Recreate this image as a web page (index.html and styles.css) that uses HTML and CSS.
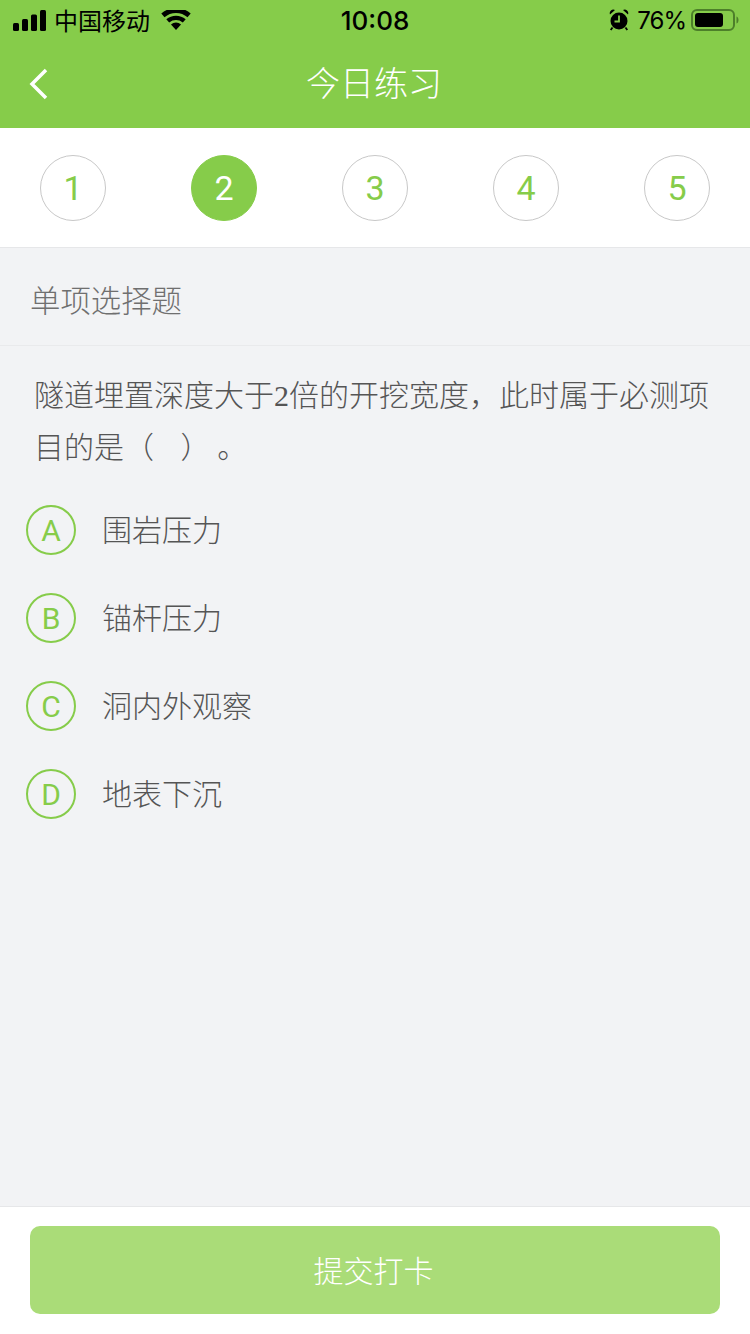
FILE: index.html
```html
<!DOCTYPE html>
<html lang="zh-CN">
<head>
    <meta charset="UTF-8">
    <meta name="viewport" content="width=device-width, initial-scale=1.0">
    <title>今日练习</title>
    <link rel="stylesheet" href="styles.css">
</head>
<body>
    <div class="page">
        <div class="top-bar">
            <div class="status-bar">
                <div class="status-left">
                    <svg class="signal" width="34" height="21" viewBox="0 0 34 21">
                        <rect x="0" y="13" width="6" height="8" rx="1.500"/>
                        <rect x="9" y="9" width="6" height="12" rx="1.500"/>
                        <rect x="18" y="4.500" width="6" height="16.500" rx="1.500"/>
                        <rect x="27" y="0" width="6" height="21" rx="1.500"/>
                    </svg>
                    <span class="carrier">中国移动</span>
                    <svg class="wifi" width="30" height="20" viewBox="0 0 30 20">
                        <path d="M15 20l-5-5.600a7.400 7.400 0 0 1 10 0z"/>
                        <path d="M8.200 12.400l-2.900-3.200a15 15 0 0 1 19.400 0l-2.900 3.200a11 11 0 0 0-13.600 0z"/>
                        <path d="M3.500 7.200L.3 3.600a22 22 0 0 1 29.400 0l-3.200 3.600a17.500 17.500 0 0 0-23 0z"/>
                    </svg>
                </div>
                <div class="status-time">10:08</div>
                <div class="status-right">
                    <svg class="alarm" width="20" height="22" viewBox="0 0 20 22">
                        <circle cx="10" cy="12" r="8.500"/>
                        <path d="M1 5.500a3.600 3.600 0 0 1 5-4.500zM19 5.500a3.600 3.600 0 0 0-5-4.500z"/>
                        <path d="M3.500 18.500l-1.800 2.500M16.500 18.500l1.800 2.500" stroke="#000" stroke-width="1.800"/>
                        <path d="M10 6.500V12.500H5.500" fill="none" stroke="#86cc4a" stroke-width="1.800"/>
                    </svg>
                    <span class="percent">76%</span>
                    <svg class="battery" width="48" height="22" viewBox="0 0 48 22">
                        <rect x="1" y="1" width="42" height="20" rx="5" fill="none" stroke="#4d7f2a" stroke-width="2"/>
                        <rect x="4" y="4" width="28" height="14" rx="3"/>
                        <path d="M45.500 7.500c1.500.5 2 2 2 3.500s-.5 3-2 3.500z" fill="#4d7f2a"/>
                    </svg>
                </div>
            </div>
            <div class="nav-bar">
                <svg class="back-icon" width="20" height="32" viewBox="0 0 20 32">
                    <path d="M17 2L3 16l14 14" fill="none" stroke="#fff" stroke-width="3.500"/>
                </svg>
                <h1>今日练习</h1>
            </div>
        </div>

        <div class="steps">
            <div class="step">1</div>
            <div class="step active">2</div>
            <div class="step">3</div>
            <div class="step">4</div>
            <div class="step">5</div>
        </div>

        <div class="section-title">单项选择题</div>

        <div class="content">
            <p class="question">隧道埋置深度大于<span class="num">2</span>倍的开挖宽度，此时属于必测项目的是（&nbsp;&nbsp;&nbsp;&nbsp;）&nbsp;。</p>
            <div class="options">
                <div class="option"><span class="letter">A</span><span class="option-text">围岩压力</span></div>
                <div class="option"><span class="letter">B</span><span class="option-text">锚杆压力</span></div>
                <div class="option"><span class="letter">C</span><span class="option-text">洞内外观察</span></div>
                <div class="option"><span class="letter">D</span><span class="option-text">地表下沉</span></div>
            </div>
        </div>

        <div class="footer">
            <button class="submit-btn">提交打卡</button>
        </div>
    </div>
</body>
</html>
```

FILE: styles.css
```css
* {
    margin: 0;
    padding: 0;
    box-sizing: border-box;
}

body {
    font-family: "Noto Sans CJK SC", "Noto Sans", sans-serif;
    background: #f2f3f5;
}

.page {
    width: 750px;
    height: 1334px;
    display: flex;
    flex-direction: column;
    overflow: hidden;
}

.top-bar {
    height: 128px;
    background: #86cc4a;
}

.status-bar {
    height: 40px;
    display: grid;
    grid-template-columns: 1fr auto 1fr;
    align-items: center;
    padding: 0 11px;
    color: #000;
}

.status-bar svg {
    display: block;
    fill: #000;
}

.status-left {
    display: flex;
    align-items: center;
}

.signal {
    margin-left: 2px;
}

.carrier {
    font-size: 24px;
    line-height: 38px;
    margin-left: 7px;
}

.wifi {
    margin-left: 11px;
}

.status-time {
    font-family: Inter, sans-serif;
    font-size: 26px;
    font-weight: 500;
}

.status-right {
    display: flex;
    align-items: center;
    justify-content: flex-end;
}

.percent {
    font-family: Inter, sans-serif;
    font-size: 24px;
    letter-spacing: -1px;
    margin-left: 8px;
}

.battery {
    margin-left: 5px;
}

.nav-bar {
    height: 88px;
    padding: 0 2px 5px 0;
    display: flex;
    align-items: center;
    justify-content: center;
    position: relative;
}

.nav-bar h1 {
    font-size: 34px;
    font-weight: 300;
    color: #fff;
}

.back-icon {
    position: absolute;
    left: 29px;
    top: 28px;
}

.steps {
    height: 120px;
    padding: 27px 40px 0;
    background: #fff;
    border-bottom: 1px solid #e6e7e9;
    display: flex;
    justify-content: space-between;
}

.step {
    width: 66px;
    height: 66px;
    border: 1px solid #c8c8c8;
    border-radius: 50%;
    display: flex;
    align-items: center;
    justify-content: center;
    font-family: Roboto, sans-serif;
    font-size: 34px;
    color: #86cc4a;
}

.step.active {
    background: #86cc4a;
    border-color: #86cc4a;
    color: #fff;
}

.section-title {
    height: 98px;
    padding-left: 30px;
    border-bottom: 1px solid #e9eaec;
    font-size: 30.400px;
    font-weight: 300;
    line-height: 103px;
    color: #6f6f6f;
}

.content {
    flex: 1;
}

.question {
    padding: 21px 30px 0 34px;
    font-size: 30px;
    font-weight: 300;
    line-height: 52px;
    color: #555;
}

.num {
    font-family: "Liberation Serif", serif;
    line-height: 1;
}

.options {
    margin-top: 15px;
    padding-left: 26px;
}

.option {
    height: 88px;
    display: flex;
    align-items: center;
    font-size: 30px;
    font-weight: 300;
    color: #555;
}

.option-text {
    margin-bottom: 4px;
}

.letter {
    width: 50px;
    height: 50px;
    margin-right: 26px;
    border: 2px solid #86cc4a;
    border-radius: 50%;
    display: flex;
    align-items: center;
    justify-content: center;
    font-family: Roboto, sans-serif;
    font-size: 30px;
    font-weight: 400;
    color: #86cc4a;
}

.footer {
    height: 128px;
    padding: 19px 30px 0;
    background: #fff;
    border-top: 1px solid #e6e7e9;
}

.submit-btn {
    display: block;
    width: 100%;
    height: 88px;
    padding: 0 3px 3px 0;
    border: none;
    border-radius: 10px;
    background: #aadc78;
    font-family: inherit;
    font-size: 30px;
    font-weight: 300;
    color: #fff;
}
```
